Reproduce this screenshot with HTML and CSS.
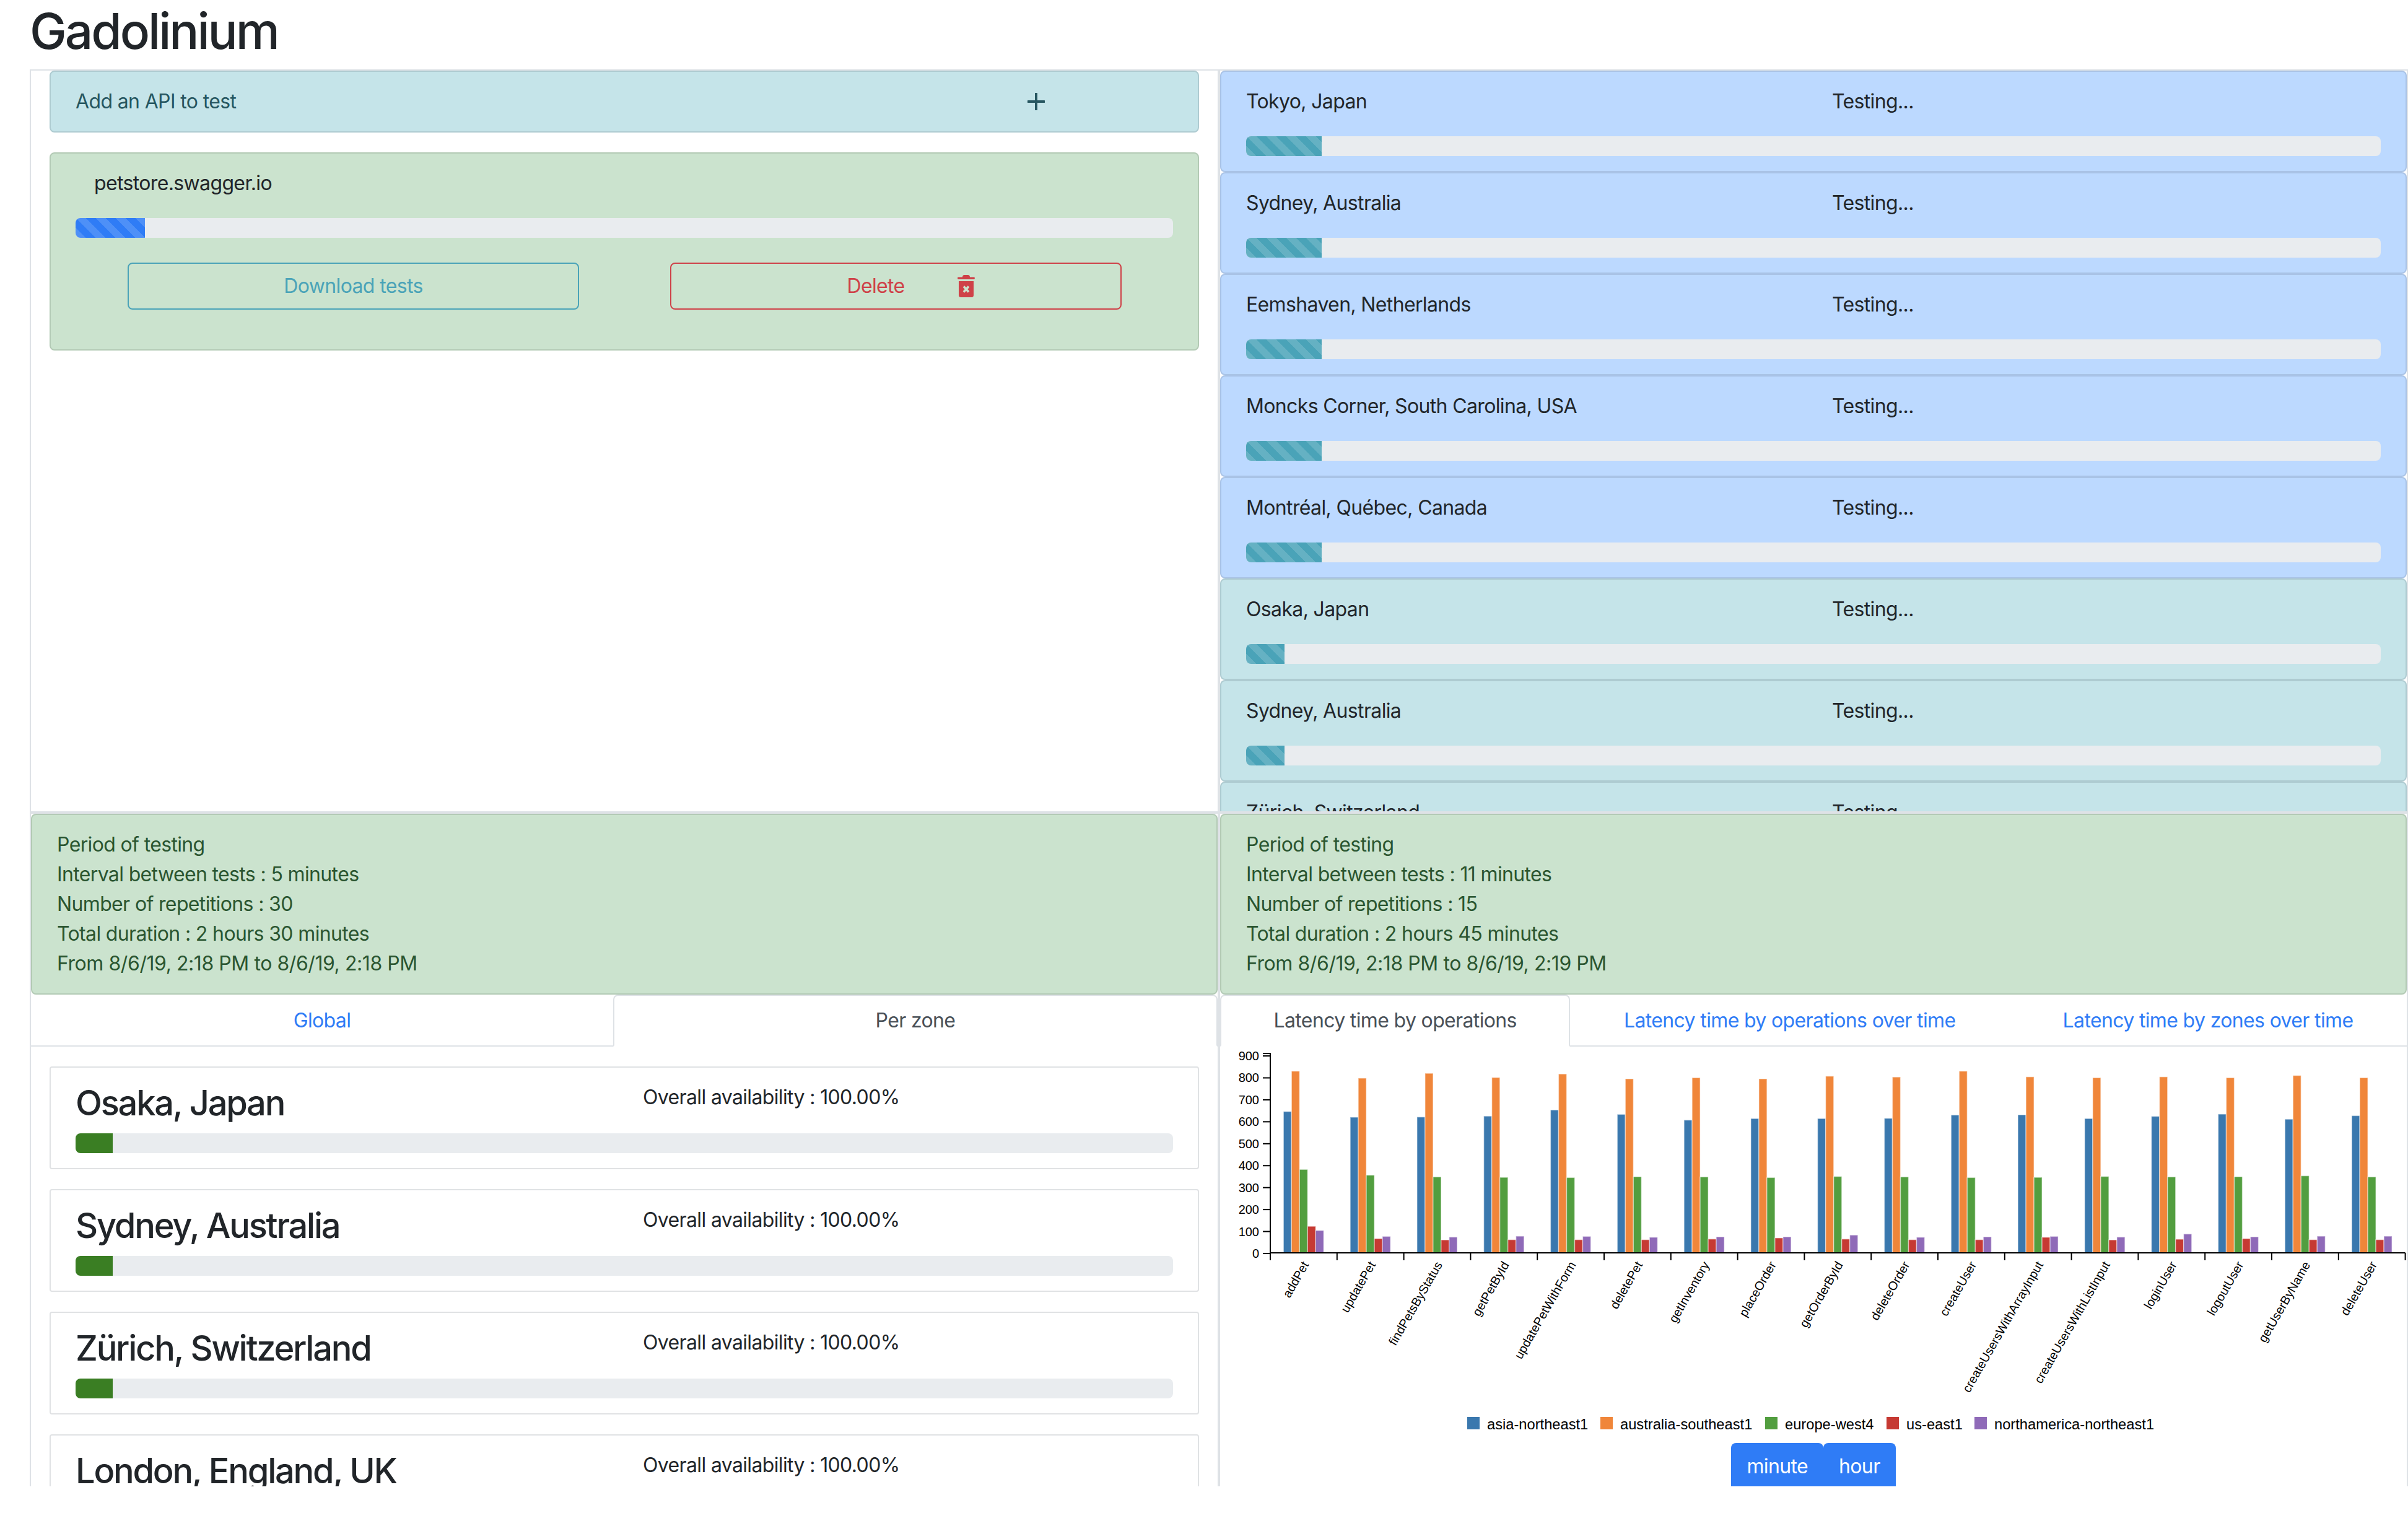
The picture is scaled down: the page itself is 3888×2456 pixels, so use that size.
FILE: index.html
```html
<!DOCTYPE html>
<html lang="en">
<head>
  <meta charset="UTF-8">
  <title>Gadolinium</title>
  <link rel="stylesheet" href="styles.css">
</head>
<body>
  <h1 class="brand">Gadolinium</h1>

  <div class="board">
    <!-- api list -->
    <section class="pane pane-apis">
      <div class="alert alert-info add-api">
        <span>Add an API to test</span>
        <svg class="icon-plus" width="28" height="28" viewBox="0 0 28 28">
          <path d="M14 1v26M1 14h26" />
        </svg>
      </div>
      <div class="alert alert-success api-card">
        <div class="api-name">petstore.swagger.io</div>
        <div class="progress"><div class="bar bar-primary" style="width: 6.32%"></div></div>
        <div class="api-actions">
          <button class="btn btn-info">Download tests</button>
          <button class="btn btn-danger">
            <span>Delete</span>
            <svg class="icon-trash" width="28" height="36" viewBox="0 0 28 36">
              <path class="trash-shape" d="M8 3.5Q8 0 11 0H17Q20 0 20 3.5H26.5Q28 3.5 28 5T26.5 7H1.5Q0 7 0 5T1.5 3.5ZM2 10H26V32.5Q26 36 22.5 36H5.5Q2 36 2 32.5Z" />
              <path class="trash-x" d="M10 18.5L18 27.5M18 18.5L10 27.5" />
            </svg>
          </button>
        </div>
      </div>
    </section>

    <!-- probes currently running -->
    <section class="pane pane-probes">
      <div class="alert alert-primary probe"><div class="probe-row"><span>Tokyo, Japan</span><span>Testing...</span></div><div class="progress"><div class="bar bar-info" style="width: 6.66%"></div></div></div>
      <div class="alert alert-primary probe"><div class="probe-row"><span>Sydney, Australia</span><span>Testing...</span></div><div class="progress"><div class="bar bar-info" style="width: 6.66%"></div></div></div>
      <div class="alert alert-primary probe"><div class="probe-row"><span>Eemshaven, Netherlands</span><span>Testing...</span></div><div class="progress"><div class="bar bar-info" style="width: 6.66%"></div></div></div>
      <div class="alert alert-primary probe"><div class="probe-row"><span>Moncks Corner, South Carolina, USA</span><span>Testing...</span></div><div class="progress"><div class="bar bar-info" style="width: 6.66%"></div></div></div>
      <div class="alert alert-primary probe"><div class="probe-row"><span>Montréal, Québec, Canada</span><span>Testing...</span></div><div class="progress"><div class="bar bar-info" style="width: 6.66%"></div></div></div>
      <div class="alert alert-info probe"><div class="probe-row"><span>Osaka, Japan</span><span>Testing...</span></div><div class="progress"><div class="bar bar-info" style="width: 3.38%"></div></div></div>
      <div class="alert alert-info probe"><div class="probe-row"><span>Sydney, Australia</span><span>Testing...</span></div><div class="progress"><div class="bar bar-info" style="width: 3.38%"></div></div></div>
      <div class="alert alert-info probe"><div class="probe-row"><span>Zürich, Switzerland</span><span>Testing...</span></div><div class="progress"><div class="bar bar-info" style="width: 3.38%"></div></div></div>
    </section>

    <!-- availability -->
    <section class="pane">
      <div class="alert alert-success period">
        <div>Period of testing</div>
        <div>Interval between tests : 5 minutes</div>
        <div>Number of repetitions : 30</div>
        <div>Total duration : 2 hours 30 minutes</div>
        <div class="period-dates">From 8/6/19, 2:18 PM to 8/6/19, 2:18 PM</div>
      </div>
      <nav class="tabs">
        <a class="tab">Global</a>
        <a class="tab active">Per zone</a>
      </nav>
      <div class="zones">
        <div class="zone"><div class="zone-row"><h3>Osaka, Japan</h3><span>Overall availability : 100.00%</span></div><div class="progress"><div class="bar bar-success" style="width: 3.39%"></div></div></div>
        <div class="zone"><div class="zone-row"><h3>Sydney, Australia</h3><span>Overall availability : 100.00%</span></div><div class="progress"><div class="bar bar-success" style="width: 3.39%"></div></div></div>
        <div class="zone"><div class="zone-row"><h3>Zürich, Switzerland</h3><span>Overall availability : 100.00%</span></div><div class="progress"><div class="bar bar-success" style="width: 3.39%"></div></div></div>
        <div class="zone"><div class="zone-row"><h3>London, England, UK</h3><span>Overall availability : 100.00%</span></div><div class="progress"><div class="bar bar-success" style="width: 3.39%"></div></div></div>
      </div>
    </section>

    <!-- latency -->
    <section class="pane">
      <div class="alert alert-success period">
        <div>Period of testing</div>
        <div>Interval between tests : 11 minutes</div>
        <div>Number of repetitions : 15</div>
        <div>Total duration : 2 hours 45 minutes</div>
        <div class="period-dates">From 8/6/19, 2:18 PM to 8/6/19, 2:19 PM</div>
      </div>
      <nav class="tabs">
        <a class="tab active">Latency time by operations</a>
        <a class="tab">Latency time by operations over time</a>
        <a class="tab">Latency time by zones over time</a>
      </nav>
      <svg id="chart" class="chart" width="1916" height="640" xmlns="http://www.w3.org/2000/svg"></svg>
      <div class="unit-switch">
        <button class="unit">minute</button>
        <button class="unit">hour</button>
      </div>
    </section>
  </div>

  <script src="chart.js"></script>
</body>
</html>
```

FILE: styles.css
```css
* {
  box-sizing: border-box;
}
body {
  margin: 0;
  padding-left: 48px;
  background: #fff;
  color: #212529;
  font-family: Inter, "Liberation Sans", sans-serif;
  font-size: 32px;
  line-height: 48px;
  letter-spacing: -0.02em;
  overflow: hidden;
}
.brand {
  margin: 0 0 14px;
  padding-top: 2px;
  font-size: 80px;
  font-weight: 500;
  line-height: 96px;
  letter-spacing: -0.0375em;
}
.board {
  display: grid;
  grid-template-columns: 1920px 1920px;
  grid-auto-rows: 1200px;
  height: 2288px;
  overflow: hidden;
}
.pane {
  border: 2px solid #dee2e6;
  overflow: hidden;
}
.pane-apis {
  padding: 0 30px;
}

/* alerts */
.alert {
  border: 2px solid;
  border-radius: 8px;
  padding: 24px 40px;
}
.alert-info {
  background: #c5e4e9;
  border-color: #aecbd1;
}
.alert-success {
  background: #cbe3ce;
  border-color: #b3cab5;
}
.alert-primary {
  background: #bcd9ff;
  border-color: #a9c3e6;
}
.add-api {
  display: grid;
  grid-template-columns: 1537px 28px;
  align-items: center;
  margin-bottom: 32px;
  color: #265660;
}
.icon-plus {
  stroke: #265660;
  fill: none;
}
.icon-plus path {
  stroke-width: 4;
  stroke-linecap: round;
}
.api-card {
  color: #212529;
}
.api-name {
  padding-left: 30px;
  margin-bottom: 32px;
}
.api-actions {
  display: flex;
  justify-content: space-between;
  padding: 0 83px 0 84px;
  margin: 40px 0 40px;
}

/* buttons */
.btn {
  display: flex;
  align-items: center;
  justify-content: center;
  width: 729px;
  height: 76px;
  border: 2px solid;
  border-radius: 8px;
  background: transparent;
  font: inherit;
  letter-spacing: inherit;
}
.btn-info {
  color: #4aa3b8;
  border-color: #4aa3b8;
}
.btn-danger {
  padding-left: 54px;
  color: #cf4148;
  border-color: #cf4148;
}
.icon-trash {
  margin-left: 85px;
}
.trash-shape {
  fill: #cf4148;
}
.trash-x {
  stroke: #cbe3ce;
  stroke-width: 3.5;
  fill: none;
}

/* progress */
.progress {
  height: 32px;
  border-radius: 8px;
  background: #e9ecef;
  overflow: hidden;
}
.bar {
  height: 100%;
}
.bar-primary,
.bar-info {
  background-image: linear-gradient(45deg, rgba(255, 255, 255, 0.15) 25%, transparent 25%, transparent 50%, rgba(255, 255, 255, 0.15) 50%, rgba(255, 255, 255, 0.15) 75%, transparent 75%, transparent);
  background-size: 32px 32px;
}
.bar-primary {
  background-color: #2f7cf6;
}
.bar-info {
  background-color: #4aa3b8;
}
.bar-success {
  background-color: #3a7e23;
}

/* probes */
.probe-row {
  display: grid;
  grid-template-columns: 946px 1fr;
  margin-bottom: 32px;
}

/* period + tabs */
.period {
  color: #2a5530;
}
.period-dates {
  letter-spacing: -0.0136em;
}
.tabs {
  display: flex;
  border-bottom: 2px solid #dee2e6;
}
.tab {
  flex: 1 1 auto;
  margin-bottom: -2px;
  padding: 16px 32px;
  border: 2px solid transparent;
  border-radius: 8px 8px 0 0;
  color: #2f7cf6;
  text-align: center;
}
.tab.active {
  background: #fff;
  color: #495057;
  border-color: #dee2e6 #dee2e6 #fff;
}

/* zones */
.zones {
  display: flex;
  flex-direction: column;
  gap: 32px;
  padding: 32px 30px 0;
}
.zone {
  border: 2px solid #e0e2e4;
  border-radius: 4px;
  padding: 24px 40px;
}
.zone-row {
  display: grid;
  grid-template-columns: 916px 1fr;
  height: 82px;
}
.zone-row h3 {
  margin: 0;
  font-size: 56px;
  font-weight: 500;
  line-height: 67px;
  letter-spacing: -0.04em;
}

/* chart */
.chart {
  display: block;
  font-family: "Liberation Sans", sans-serif;
  font-size: 20px;
  letter-spacing: 0;
}
.legend-label {
  font-size: 23.7px;
}
.axis-line {
  stroke: #000;
  stroke-width: 2;
  fill: none;
}
.chart-bar {
  stroke: rgba(255, 255, 255, 0.45);
  stroke-width: 1.5;
}
.unit-switch {
  display: flex;
  justify-content: center;
}
.unit {
  height: 76px;
  padding: 0 25px;
  border: 0;
  border-radius: 8px 8px 0 0;
  background: #2f7cf6;
  color: #fff;
  font: inherit;
  letter-spacing: inherit;
}
```

FILE: chart.js
```js
const NS = "http://www.w3.org/2000/svg";
const chart = document.getElementById("chart");

const colors = ["#3a78ae", "#f0863a", "#529e3f", "#c63a33", "#8f6ab8"];
const zones = ["asia-northeast1", "australia-southeast1", "europe-west4", "us-east1", "northamerica-northeast1"];
const legendX = [399, 614, 880, 1076, 1218];

// operation, then one latency per zone
const data = [
  ["addPet", 644, 828, 380, 121, 102],
  ["updatePet", 618, 796, 354, 65, 75],
  ["findPetsByStatus", 619, 818, 346, 59, 72],
  ["getPetById", 623, 799, 344, 60, 76],
  ["updatePetWithForm", 651, 815, 343, 60, 75],
  ["deletePet", 631, 793, 347, 60, 71],
  ["getInventory", 605, 798, 346, 63, 73],
  ["placeOrder", 612, 793, 343, 68, 73],
  ["getOrderById", 612, 805, 348, 63, 81],
  ["deleteOrder", 613, 801, 346, 60, 71],
  ["createUser", 628, 828, 343, 60, 73],
  ["createUsersWithArrayInput", 629, 802, 344, 71, 75],
  ["createUsersWithListInput", 612, 798, 348, 59, 72],
  ["loginUser", 622, 802, 346, 62, 86],
  ["logoutUser", 632, 798, 347, 65, 73],
  ["getUserByName", 609, 808, 351, 60, 76],
  ["deleteUser", 625, 798, 346, 60, 76]
];

const left = 81;       // y axis
const base = 333;      // x axis
const zero = 334;
const perUnit = 0.3544;
const band = 107.8;
const barWidth = 13;

function add(tag, attrs, text) {
  const el = document.createElementNS(NS, tag);
  for (const key in attrs) el.setAttribute(key, attrs[key]);
  if (text !== undefined) el.textContent = text;
  chart.appendChild(el);
  return el;
}

// bars
data.forEach((row, i) => {
  const x0 = left + i * band + 21.3;
  for (let z = 0; z < 5; z++) {
    const h = row[z + 1] * perUnit;
    add("rect", { class: "chart-bar", x: x0 + z * barWidth, y: zero - h - 1, width: barWidth, height: h, fill: colors[z] });
  }
});

// y axis
for (let v = 0; v <= 900; v += 100) {
  const y = zero - v * perUnit;
  add("line", { class: "axis-line", x1: left - 12, x2: left, y1: y, y2: y });
  add("text", { x: left - 18, y: y + 7, "text-anchor": "end" }, v);
}
add("path", { class: "axis-line", d: `M${left - 12} 11H${left}V${base}` });

// x axis
add("path", { class: "axis-line", d: `M${left} ${base}H${left + band * 17}` });
for (let i = 0; i <= 17; i++) {
  const x = left + i * band;
  add("line", { class: "axis-line", x1: x, x2: x, y1: base, y2: base + 12 });
}
data.forEach((row, i) => {
  const x = left + i * band + band / 2 + 9;
  add("text", { "text-anchor": "end", transform: `translate(${x} 352) rotate(-60)` }, row[0]);
});

// legend
zones.forEach((zone, i) => {
  add("rect", { x: legendX[i], y: 598, width: 20, height: 20, fill: colors[i] });
  add("text", { class: "legend-label", x: legendX[i] + 32, y: 618 }, zone);
});
```
